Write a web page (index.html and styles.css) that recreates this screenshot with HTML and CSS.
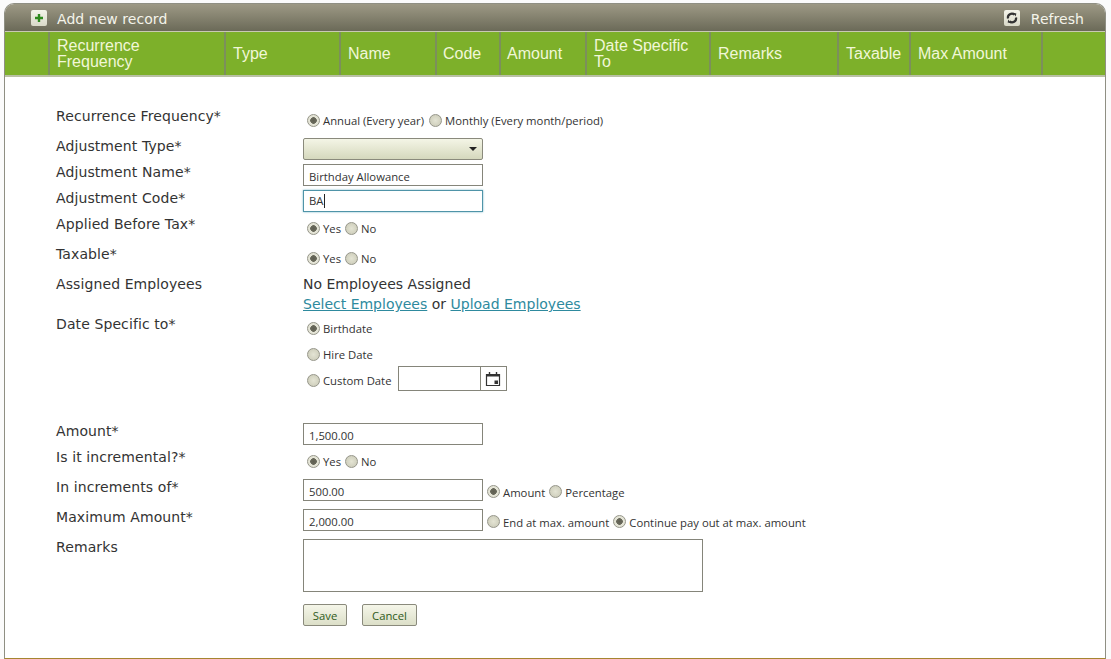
FILE: index.html
```html
<!DOCTYPE html>
<html lang="en">
<head>
<meta charset="utf-8">
<title>Add new record</title>
<link rel="stylesheet" href="styles.css">
</head>
<body>
<div class="panel">
  <div class="toolbar">
    <a class="tool add">
      <span class="icon-box"><svg width="16" height="16" viewBox="0 0 16 16"><path d="M8 4v8M4 8h8" stroke="#2f8a1e" stroke-width="2.4" fill="none"/></svg></span>
      <span class="tool-text">Add new record</span>
    </a>
    <a class="tool refresh">
      <span class="icon-box"><svg width="16" height="16" viewBox="0 0 16 16"><path d="M4 8.5A4 4 0 0 1 10.5 4.6" stroke="#333" stroke-width="2.2" fill="none"/><path d="M12 7.5A4 4 0 0 1 5.5 11.4" stroke="#333" stroke-width="2.2" fill="none"/><path d="M9.2 2.8l3.2.6-.8 3.2zM6.8 13.2l-3.2-.6.8-3.2z" fill="#333"/></svg></span>
      <span class="tool-text">Refresh</span>
    </a>
  </div>
  <div class="thead">
    <div class="th c0"></div>
    <div class="th c1">Recurrence Frequency</div>
    <div class="th c2">Type</div>
    <div class="th c3">Name</div>
    <div class="th c4">Code</div>
    <div class="th c5">Amount</div>
    <div class="th c6">Date Specific To</div>
    <div class="th c7">Remarks</div>
    <div class="th c8">Taxable</div>
    <div class="th c9">Max Amount</div>
    <div class="th c10"></div>
  </div>
  <form class="form">
    <div class="row h30">
      <div class="label">Recurrence Frequency*</div>
      <div class="radios"><input type="radio" name="r1" checked><span class="wide">Annual (Every year)</span><input type="radio" name="r1"><span>Monthly (Every month/period)</span></div>
    </div>
    <div class="row h26">
      <div class="label">Adjustment Type*</div>
      <div class="ctl"><div class="select"><span class="arrow"></span></div></div>
    </div>
    <div class="row h26">
      <div class="label">Adjustment Name*</div>
      <div class="ctl"><input class="text" type="text" value="Birthday Allowance"></div>
    </div>
    <div class="row h26">
      <div class="label">Adjustment Code*</div>
      <div class="ctl"><div class="text focus">BA<span class="caret"></span></div></div>
    </div>
    <div class="row h30">
      <div class="label">Applied Before Tax*</div>
      <div class="radios"><input type="radio" name="r2" checked><span>Yes</span><input type="radio" name="r2"><span>No</span></div>
    </div>
    <div class="row h30">
      <div class="label">Taxable*</div>
      <div class="radios"><input type="radio" name="r3" checked><span>Yes</span><input type="radio" name="r3"><span>No</span></div>
    </div>
    <div class="row h40">
      <div class="label">Assigned Employees</div>
      <div class="assigned">
        <div>No Employees Assigned</div>
        <div><a class="link">Select Employees</a> or <a class="link">Upload Employees</a></div>
      </div>
    </div>
    <div class="row h107">
      <div class="label">Date Specific to*</div>
      <div class="dates">
        <div class="date-line"><input type="radio" name="r4" checked><span>Birthdate</span></div>
        <div class="date-line"><input type="radio" name="r4"><span>Hire Date</span></div>
        <div class="date-line"><input type="radio" name="r4"><span>Custom Date</span>
          <div class="picker"><span class="picker-field"></span><span class="picker-btn"><svg width="16" height="16" viewBox="0 0 16 16"><path d="M1.5 3.5h13v11h-13z" fill="#fff" stroke="#333" stroke-width="1.2"/><path d="M1.5 3h13v2.5h-13z" fill="#333"/><path d="M4.5 1v3M11.5 1v3" stroke="#333" stroke-width="1.4"/><path d="M9.5 9.5h3.5v3.5h-3.5z" fill="#333"/></svg></span></div>
        </div>
      </div>
    </div>
    <div class="row h26">
      <div class="label">Amount*</div>
      <div class="ctl"><input class="text" type="text" value="1,500.00"></div>
    </div>
    <div class="row h30">
      <div class="label">Is it incremental?*</div>
      <div class="radios"><input type="radio" name="r5" checked><span>Yes</span><input type="radio" name="r5"><span>No</span></div>
    </div>
    <div class="row h30">
      <div class="label">In increments of*</div>
      <div class="ctl inline"><input class="text" type="text" value="500.00"><input type="radio" name="r6" checked><span>Amount</span><input type="radio" name="r6"><span>Percentage</span></div>
    </div>
    <div class="row h30">
      <div class="label">Maximum Amount*</div>
      <div class="ctl inline"><input class="text" type="text" value="2,000.00"><input type="radio" name="r7"><span>End at max. amount</span><input type="radio" name="r7" checked><span>Continue pay out at max. amount</span></div>
    </div>
    <div class="row">
      <div class="label">Remarks</div>
      <div class="ctl"><textarea class="area"></textarea></div>
    </div>
    <div class="actions">
      <button class="btn save" type="button">Save</button>
      <button class="btn cancel" type="button">Cancel</button>
    </div>
  </form>
</div>
</body>
</html>
```
FILE: styles.css
```css
html, body { margin: 0; padding: 0; height: 659px; overflow: hidden; }
body { background: #fbfbfb; }
* { box-sizing: border-box; }

.panel {
  margin: 3px 0 0 4px;
  width: 1102px;
  height: 656px;
  background: #fff;
  border: 1px solid #8f8f83;
  border-bottom: 1px solid #a58530;
  border-radius: 10px 10px 0 0;
  overflow: hidden;
  font-family: "DejaVu Sans", Verdana, sans-serif;
  color: #333;
}

.toolbar {
  height: 28px;
  padding: 0 21px 0 26px;
  display: flex;
  justify-content: space-between;
  align-items: center;
  background: linear-gradient(#9d9985, #6b6a58);
  border-bottom: 1px solid #c9c9b4;
  color: #f4f4ea;
  font-size: 14px;
}
.tool { display: flex; align-items: center; gap: 10px; }
.tool-text { margin-top: 2px; letter-spacing: .05px; }
.refresh { gap: 11px; }
.icon-box {
  width: 16px; height: 16px;
  display: block;
  background: linear-gradient(#f4f4ea, #d9d9c8);
  border-radius: 2px;
}
.icon-box svg { display: block; }

.thead {
  height: 43px;
  display: flex;
  background: #7db02a;
  font-family: "Liberation Sans", Arial, sans-serif;
  font-size: 16px;
  line-height: 16px;
  color: #f1f7d8;
}
.th {
  display: flex;
  align-items: center;
  padding: 0 6px 0 7px;
  border-right: 2px solid #7c8f5c;
}
.c0 { width: 45px; }
.c1 { width: 176px; }
.c2 { width: 115px; }
.c3 { width: 96px; }
.c4 { width: 64px; padding-left: 6px; }
.c5 { width: 86px; padding-left: 6px; }
.c6 { width: 124px; }
.c7 { width: 128px; }
.c8 { width: 72px; }
.c9 { width: 132px; }
.c10 { flex: 1; border-right: 0; }

.form {
  border-top: 2px solid #b9c0a4;
  padding: 26px 0 0 51px;
}
.row { display: flex; align-items: flex-start; }
.h26 { height: 26px; }
.h30 { height: 30px; }
.h40 { height: 40px; }
.h107 { height: 107px; }
.label {
  width: 247px;
  flex: none;
  height: 26px;
  line-height: 26px;
  font-size: 14px;
  letter-spacing: .1px;
}

.radios, .ctl, .date-line {
  font-family: "Open Sans", "Segoe UI", sans-serif;
  font-size: 11.3px;
}
.radios {
  height: 28px;
  padding: 6px 0 0 4px;
  display: flex;
  align-items: center;
  line-height: 22px;
}
.ctl { padding-top: 5px; }
.inline { display: flex; align-items: center; }
.inline .text { margin-right: 4px; }
.inline input[type=radio] { margin-top: 2px; }
.inline input[type=radio] + span { margin-top: 4px; }

input[type=radio] {
  appearance: none;
  width: 13px; height: 13px;
  margin: 0 3px 0 0;
  flex: none;
  border: 1px solid #96968a;
  border-radius: 50%;
  background: radial-gradient(circle, #e4e4d4 0, #c8c8b5 100%);
}
input[type=radio]:checked {
  background: radial-gradient(circle, #5f5f52 0, #6a6a5c 3px, #e4e4d6 3.6px);
}
input[type=radio] + span { margin: 2px 4px 0 0; }
input[type=radio] + .wide { margin-right: 5px; }

.text {
  display: block;
  width: 180px;
  height: 22px;
  padding: 2px 5px 0;
  border: 1px solid #85857a;
  background: #fff;
  color: #333;
  font: 11.3px/20px "Open Sans", "Segoe UI", sans-serif;
  border-radius: 0;
  outline: none;
}
.focus {
  border-color: #4f94a8;
  box-shadow: 0 0 2px #7ab8c9;
  display: flex;
  align-items: center;
  padding-top: 0;
}
.caret { width: 1px; height: 14px; background: #222; margin-left: 1px; }

.select {
  width: 180px; height: 22px;
  border: 1px solid #8a8a7c;
  border-radius: 2px;
  background: linear-gradient(#f4f5e6, #d5d8bd);
  display: flex;
  align-items: center;
  justify-content: flex-end;
  padding-right: 5px;
}
.arrow {
  width: 0; height: 0;
  border-left: 4px solid transparent;
  border-right: 4px solid transparent;
  border-top: 4px solid #222;
}

.assigned { font-size: 14px; line-height: 20px; padding-top: 3px; }
.link { color: #2e8a9e; text-decoration: underline; }

.dates { padding-top: 4px; padding-left: 4px; }
.date-line { height: 26px; display: flex; align-items: center; }
.date-line span { line-height: 22px; }
.picker {
  width: 109px; height: 25px;
  display: flex;
  border: 1px solid #85857a;
  margin: 0 0 3px 2px;
}
.picker-field { flex: 1; }
.picker-btn {
  width: 26px;
  border-left: 1px solid #85857a;
  display: flex; align-items: center; justify-content: center;
}

.area {
  display: block;
  width: 400px; height: 53px;
  border: 1px solid #85857a;
  background: #fff;
  resize: none;
  outline: none;
}
.actions {
  margin: 12px 0 0 247px;
  display: flex;
  gap: 15px;
}
.btn {
  height: 22px;
  padding: 0;
  border: 1px solid #8a8a7c;
  border-radius: 2px;
  background: linear-gradient(#f5f6e9, #dcdfc8);
  color: #2f5b20;
  font: 11.3px "Open Sans", "Segoe UI", sans-serif;
}
.save { width: 44px; }
.cancel { width: 55px; }
```
